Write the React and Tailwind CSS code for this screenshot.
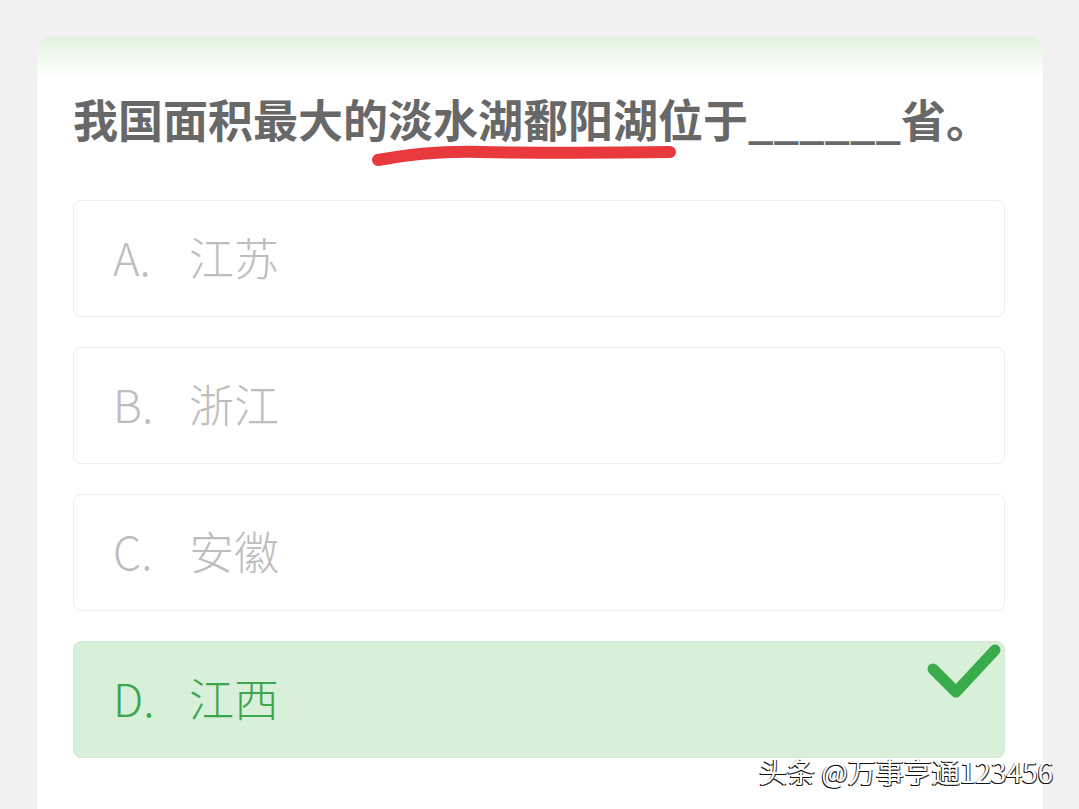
import React from 'react';

const options = [
  { key: 'A.', label: '江苏' },
  { key: 'B.', label: '浙江' },
  { key: 'C.', label: '安徽' },
  { key: 'D.', label: '江西', correct: true },
];

const Option = ({ item }) => {
  const base = 'relative flex items-center h-[117px] w-[932px] rounded-[8px] border pl-[39px] pb-[5px] text-[45px] leading-none';
  const tone = item.correct
    ? 'bg-[#d8f0da] border-[#d2e9d4] text-[#3da64d]'
    : 'bg-white border-[#ececec] text-[#bdbdbd]';

  return (
    <div className={`${base} ${tone}`}>
      <span className="w-[76px] font-light">{item.key}</span>
      <span className="font-light">{item.label}</span>
      {item.correct && (
        <svg className="absolute top-0 left-[849px]" width="82" height="60" viewBox="0 0 82 60">
          <polyline
            points="10,27 33,50 72,8"
            fill="none"
            stroke="#3aab4a"
            strokeWidth="11"
            strokeLinecap="round"
            strokeLinejoin="round"
          />
        </svg>
      )}
    </div>
  );
};

export default function App() {
  return (
    <div
      className="relative h-[809px] w-[1079px] overflow-hidden bg-[#f1f1f1] pt-[37px] pl-[37px] pr-[36px] flex"
      style={{ fontFamily: '"Noto Sans CJK SC", "Noto Sans", sans-serif' }}
    >
      <div className="flex-1 flex flex-col rounded-t-[12px] bg-[linear-gradient(180deg,#e1f2de_0px,#f4fbf3_24px,#ffffff_44px)] px-[36px]">
        {/* question */}
        <div className="relative h-[163px] pt-[59px]">
          <p className="text-[45px] leading-[45px] font-bold text-[#686868] whitespace-nowrap">
            我国面积最大的淡水湖鄱阳湖位于______省。
          </p>
          <svg
            className="absolute left-[297px] top-[106px]"
            width="310"
            height="26"
            viewBox="0 0 310 26"
          >
            <path
              d="M8,17 C40,11 70,8 110,9 C170,10 240,10 300,9"
              fill="none"
              stroke="#e8393c"
              strokeWidth="12"
              strokeLinecap="round"
            />
          </svg>
        </div>

        {/* options */}
        <div className="flex flex-col gap-[30px]">
          {options.map((item) => (
            <Option key={item.key} item={item} />
          ))}
        </div>
      </div>

      {/* watermark */}
      <div className="absolute left-[759px] top-[754px] text-[28px] leading-[34px] text-white whitespace-nowrap [text-shadow:-1px_1px_0_#111,1px_1px_0_#333]">
        头条 @万事亨通123456
      </div>
    </div>
  );
}
